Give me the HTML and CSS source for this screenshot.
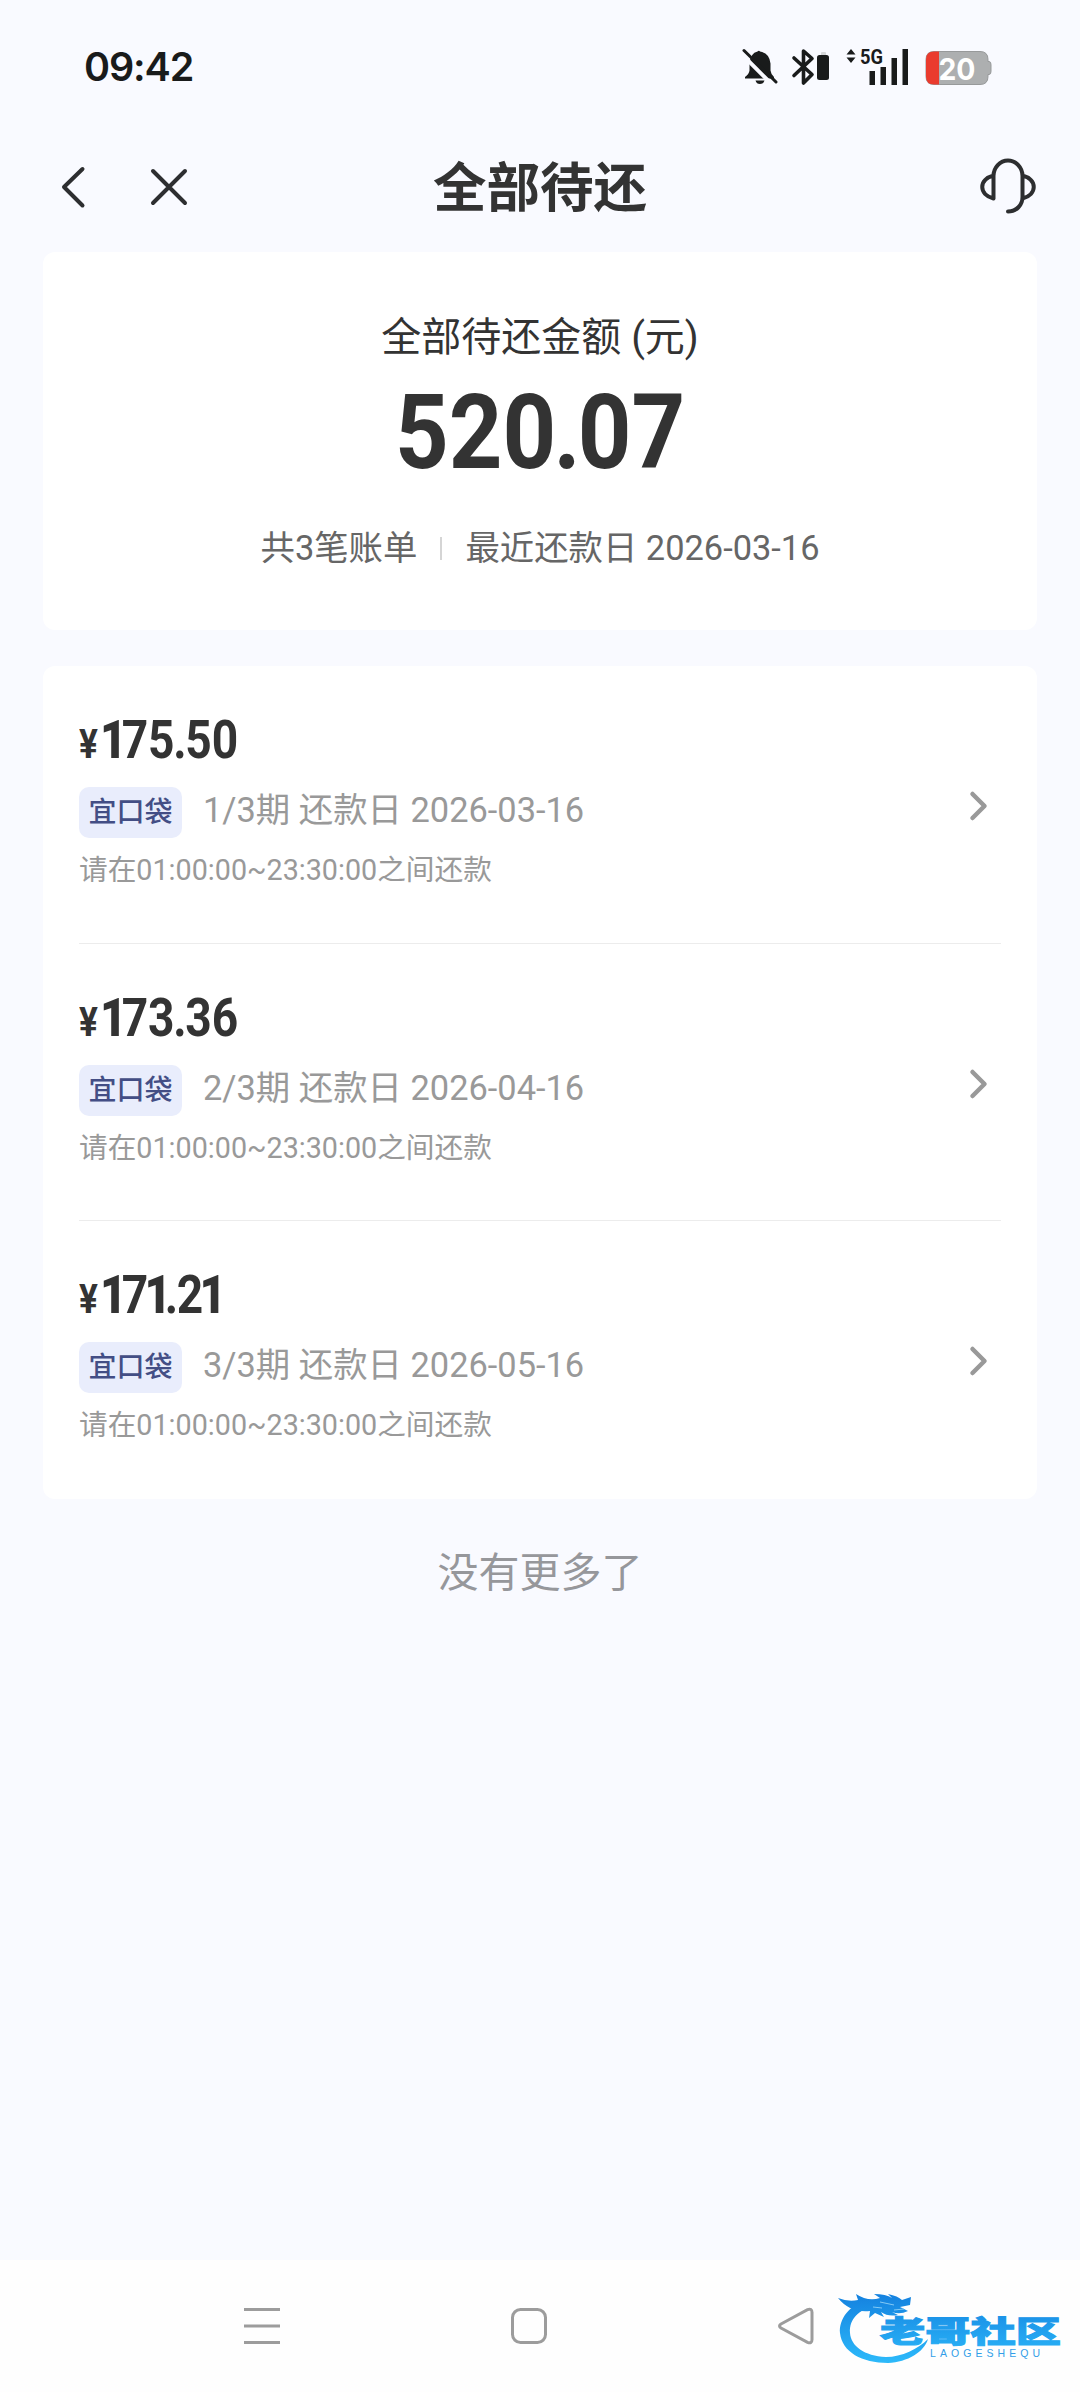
FILE: index.html
```
<!DOCTYPE html>
<html lang="zh-CN">
<head>
  <meta charset="UTF-8" />
  <meta name="viewport" content="width=device-width, initial-scale=1.0"/>
  <title>全部待还</title>
  <link rel="stylesheet" href="styles.css">
</head>
<body>
  <div class="statusbar">
    <span class="time">09:42</span>
    <svg class="status-icons" width="250" height="40" viewBox="742 46 250 40">
      <!-- muted bell -->
      <path fill="#191b1b" d="M760 51.500q9.500 1.500 10.500 12v7q.5 4 3.500 6.500v1.500h-29v-1.500q4-3 4.500-6.500v-7q1-10.500 8-12q1.500-1.500 2.500 0zM755.500 80.500h9q-1 3.500-4.500 3.500t-4.500-3.500z"/>
      <path stroke="#f9faff" stroke-width="4" d="M741 53.500l32 32"/>
      <path stroke="#191b1b" stroke-width="3" stroke-linecap="round" d="M744 50.500l32 31.500"/>
      <!-- bluetooth + device battery -->
      <path fill="none" stroke="#191b1b" stroke-width="3.600" stroke-linejoin="round" stroke-linecap="round" d="M794 58l18 16.500-8.500 8.500V51l8.500 7.500L794 75.500"/>
      <rect x="821" y="52" width="5" height="4" rx="1" fill="#d5d7d9"/>
      <rect x="817" y="55" width="12" height="25" rx="2.500" fill="#191b1b"/>
      <!-- signal -->
      <path fill="#191b1b" d="M846.500 54.500l4.500-5.500 4.500 5.500zM846.500 57.500l4.500 5.500 4.500-5.500z"/>
      <text class="net" x="860" y="63.500" textLength="23" lengthAdjust="spacingAndGlyphs">5G</text>
      <path fill="#191b1b" d="M869.500 71h5.500v14h-5.500zM880.500 67h5.500v18h-5.500zM891.500 58h5.500v27h-5.500zM902.500 49h5.500v36h-5.500z"/>
      <!-- battery -->
      <path fill="#adafb0" stroke="#97999a" d="M934 51.500h46q8 0 8 8v2h1q2 0 2 3v7q0 3-2 3h-1v2q0 8-8 8h-46q-8 0-8-8v-17q0-8 8-8z"/>
      <path fill="#ea3b2e" d="M939 51.500h-5q-8 0-8 8v17q0 8 8 8h5z"/>
      <text class="level" x="938.500" y="79.500" textLength="37" lengthAdjust="spacingAndGlyphs">20</text>
    </svg>
  </div>

  <div class="header">
    <div class="header-left">
      <svg width="26" height="44" viewBox="0 0 26 44"><path class="line" d="M22.500 4L4 22l18.500 18.500"/></svg>
      <svg width="40" height="40" viewBox="0 0 40 40"><path class="line" d="M4 4l32 32M36 4L4 36"/></svg>
    </div>
    <h1>全部待还</h1>
    <svg class="service" width="60" height="60" viewBox="0 0 60 60"><path class="line" d="M15.500 41.500V19a14.500 15.500 0 0 1 29 0V40c0 8-6 14.500-14.500 14.500M15.500 18.500c-15 4-15 19 0 23M44.500 18.500c15 4 15 19 0 23"/></svg>
  </div>

  <div class="card summary">
    <p class="label">全部待还金额 (元)</p>
    <p class="total"><span class="din">520<i>.</i>07</span></p>
    <p class="info"><span>共3笔账单</span><span class="bar"></span><span>最近还款日 2026-03-16</span></p>
  </div>

  <div class="card list">
    <div class="bill">
      <div>
        <p class="amount"><span class="yen">¥</span><span class="din"><b>1</b>75<i>.</i>50</span></p>
        <p class="meta"><span class="tag">宜口袋</span><span class="due">1/3期 还款日 2026-03-16</span></p>
        <p class="note">请在01:00:00~23:30:00之间还款</p>
      </div>
      <svg class="arrow" width="20" height="32" viewBox="0 0 20 32"><path d="M3.500 4l12 12-12 12"/></svg>
    </div>
    <div class="bill">
      <div>
        <p class="amount"><span class="yen">¥</span><span class="din"><b>1</b>73<i>.</i>36</span></p>
        <p class="meta"><span class="tag">宜口袋</span><span class="due">2/3期 还款日 2026-04-16</span></p>
        <p class="note">请在01:00:00~23:30:00之间还款</p>
      </div>
      <svg class="arrow" width="20" height="32" viewBox="0 0 20 32"><path d="M3.500 4l12 12-12 12"/></svg>
    </div>
    <div class="bill">
      <div>
        <p class="amount"><span class="yen">¥</span><span class="din"><b>1</b>7<b>1</b><i>.</i>2<b>1</b></span></p>
        <p class="meta"><span class="tag">宜口袋</span><span class="due">3/3期 还款日 2026-05-16</span></p>
        <p class="note">请在01:00:00~23:30:00之间还款</p>
      </div>
      <svg class="arrow" width="20" height="32" viewBox="0 0 20 32"><path d="M3.500 4l12 12-12 12"/></svg>
    </div>
  </div>

  <p class="nomore">没有更多了</p>

  <div class="navbar">
    <svg width="36" height="38" viewBox="0 0 36 38"><path d="M0 2.500h36M0 19h36M0 35.500h36"/></svg>
    <svg width="36" height="38" viewBox="0 0 36 38"><rect x="1.500" y="2.500" width="33" height="33" rx="8"/></svg>
    <svg width="36" height="38" viewBox="0 0 36 38"><path d="M3 17L29.500 2.600Q34 1 34 5.500v27q0 4.500-4.500 2.900L3 21q-3-2 0-4z"/></svg>
  </div>

  <svg class="watermark" width="230" height="86" viewBox="834 2282 230 86">
    <defs>
      <linearGradient id="blue" gradientUnits="userSpaceOnUse" x1="0" y1="2296" x2="0" y2="2362">
        <stop offset="0" stop-color="#1583e0"/>
        <stop offset="1" stop-color="#2cb9fa"/>
      </linearGradient>
    </defs>
    <!-- dragon -->
    <path fill="url(#blue)" d="M870 2300C848 2304 839 2320 840 2333C842 2352 862 2363 888 2363C908 2362 924 2352 928 2339C918 2349 902 2357 886 2357C864 2356 851 2346 850 2333C849 2318 860 2310 872 2307z"/>
    <path fill="url(#blue)" d="M838 2298q10 4 20 2l-2-6q12 8 24 4l-6-4q12 0 18 4l-4-4q10 2 14 6l9-3-1 8-10 2 8 4q-8 4-16 1l6 3q-10 2-17-3l3 5-9-4-6 5 1-7q-20 2-32-13z"/>
    <path fill="none" stroke="#83c9f5" stroke-width="1" d="M880 2302l14 3M873 2307l9 1M894 2310l10-1"/>
    <text class="wm-name" fill="url(#blue)" stroke="url(#blue)" x="880" y="2342" textLength="181" lengthAdjust="spacingAndGlyphs">老哥社区</text>
    <text class="wm-latin" x="930" y="2357" textLength="110">LAOGESHEQU</text>
  </svg>
</body>
</html>
```

FILE: styles.css
```
* {
  box-sizing: border-box;
}
body {
  margin: 0;
  height: 2392px;
  display: flex;
  flex-direction: column;
  position: relative;
  background-color: #f9faff;
  color: #333;
  font-family: Roboto, "Noto Sans CJK SC", sans-serif;
}
h1, p {
  margin: 0;
}
svg {
  display: block;
  flex: none;
}

.statusbar {
  height: 132px;
  padding: 0 88px 0 84px;
  display: flex;
  justify-content: space-between;
  align-items: center;
}
.time {
  padding-top: 3px;
  font: 600 39.5px/1 Inter, sans-serif;
  letter-spacing: -1.1px;
  color: #191b1b;
}
.net {
  font: 700 21px Roboto, sans-serif;
  fill: #191b1b;
}
.level {
  font: 700 30px Inter, sans-serif;
  fill: #fff;
}

.header {
  height: 120px;
  padding: 0 42px 10px 60px;
  display: grid;
  grid-template-columns: 1fr auto 1fr;
  align-items: center;
}
.header-left {
  display: flex;
  align-items: center;
  gap: 63px;
}
.header h1 {
  margin-right: 18px;
  padding-top: 4px;
  font-size: 53.5px;
  line-height: 80px;
  font-weight: 700;
}
.line {
  fill: none;
  stroke: #2d2e30;
  stroke-width: 4;
  stroke-linecap: round;
  stroke-linejoin: round;
}
.service {
  justify-self: end;
}

.card {
  margin: 0 43px;
  background-color: #fff;
  border-radius: 12px;
}
.din {
  display: inline-block;
  font-weight: 700;
  transform: scaleX(0.87);
  transform-origin: left;
}
/* tighter point and proportional 1 */
.din i {
  font-style: normal;
  margin: 0 -0.03em;
}
.din b {
  margin: 0 -0.11em 0 -0.08em;
}
.din b:first-child {
  margin-left: 0;
}

.summary {
  height: 378px;
  padding-top: 58px;
  text-align: center;
}
.label {
  font-size: 40px;
  line-height: 56px;
}
.total {
  padding-top: 3px;
  font-size: 104px;
  line-height: 128px;
}
.total .din {
  transform: scaleX(0.9);
  transform-origin: center;
}
.info {
  margin-top: 23px;
  display: flex;
  justify-content: center;
  align-items: center;
  font-size: 34.4px;
  line-height: 56px;
  color: #666;
}
.bar {
  width: 2px;
  height: 23px;
  margin: 0 23px;
  background-color: #d5d5d5;
}

.list {
  margin-top: 36px;
  padding: 0 36px;
}
.bill {
  height: 277.5px;
  padding-top: 42px;
  padding-right: 12px;
  display: flex;
  justify-content: space-between;
  align-items: flex-start;
  border-bottom: 1px solid #ececec;
}
.bill:last-child {
  border-bottom: none;
}
.amount {
  display: flex;
  align-items: baseline;
  font-size: 53px;
  line-height: 64px;
}
.yen {
  width: 21px;
  font-size: 40px;
  font-weight: 700;
  transform: scaleX(0.88);
  transform-origin: left;
}
.meta {
  margin-top: 10px;
  display: flex;
  align-items: center;
  font-size: 34.4px;
  line-height: 51px;
  color: #999;
}
.tag {
  height: 51px;
  margin-right: 21px;
  padding: 0 9.5px;
  border-radius: 10px;
  background-color: #e9edfc;
  color: #434e85;
  font-size: 28px;
  font-weight: 500;
}
.due {
  padding-bottom: 4px;
  line-height: 47px;
}
.note {
  margin-top: 11px;
  font-size: 28.7px;
  line-height: 42px;
  color: #999;
}
.arrow {
  margin-top: 82px;
}
.arrow path {
  fill: none;
  stroke: #999;
  stroke-width: 4.5;
  stroke-linecap: round;
  stroke-linejoin: round;
}

.nomore {
  margin-top: 44px;
  text-align: center;
  font-size: 41px;
  line-height: 60px;
  color: #96979b;
}

.navbar {
  height: 132px;
  margin-top: auto;
  padding: 0 266px 0 244px;
  display: flex;
  justify-content: space-between;
  align-items: center;
  background-color: #fefefe;
}
.navbar svg {
  fill: none;
  stroke: #9c9c9c;
  stroke-width: 3;
}

.watermark {
  position: absolute;
  right: 16px;
  bottom: 24px;
}
.wm-name {
  font: 900 30px "Noto Sans CJK SC", sans-serif;
  stroke-width: 1;
}
.wm-latin {
  font: 10.5px "Liberation Sans", sans-serif;
  fill: #329fe8;
}
```
